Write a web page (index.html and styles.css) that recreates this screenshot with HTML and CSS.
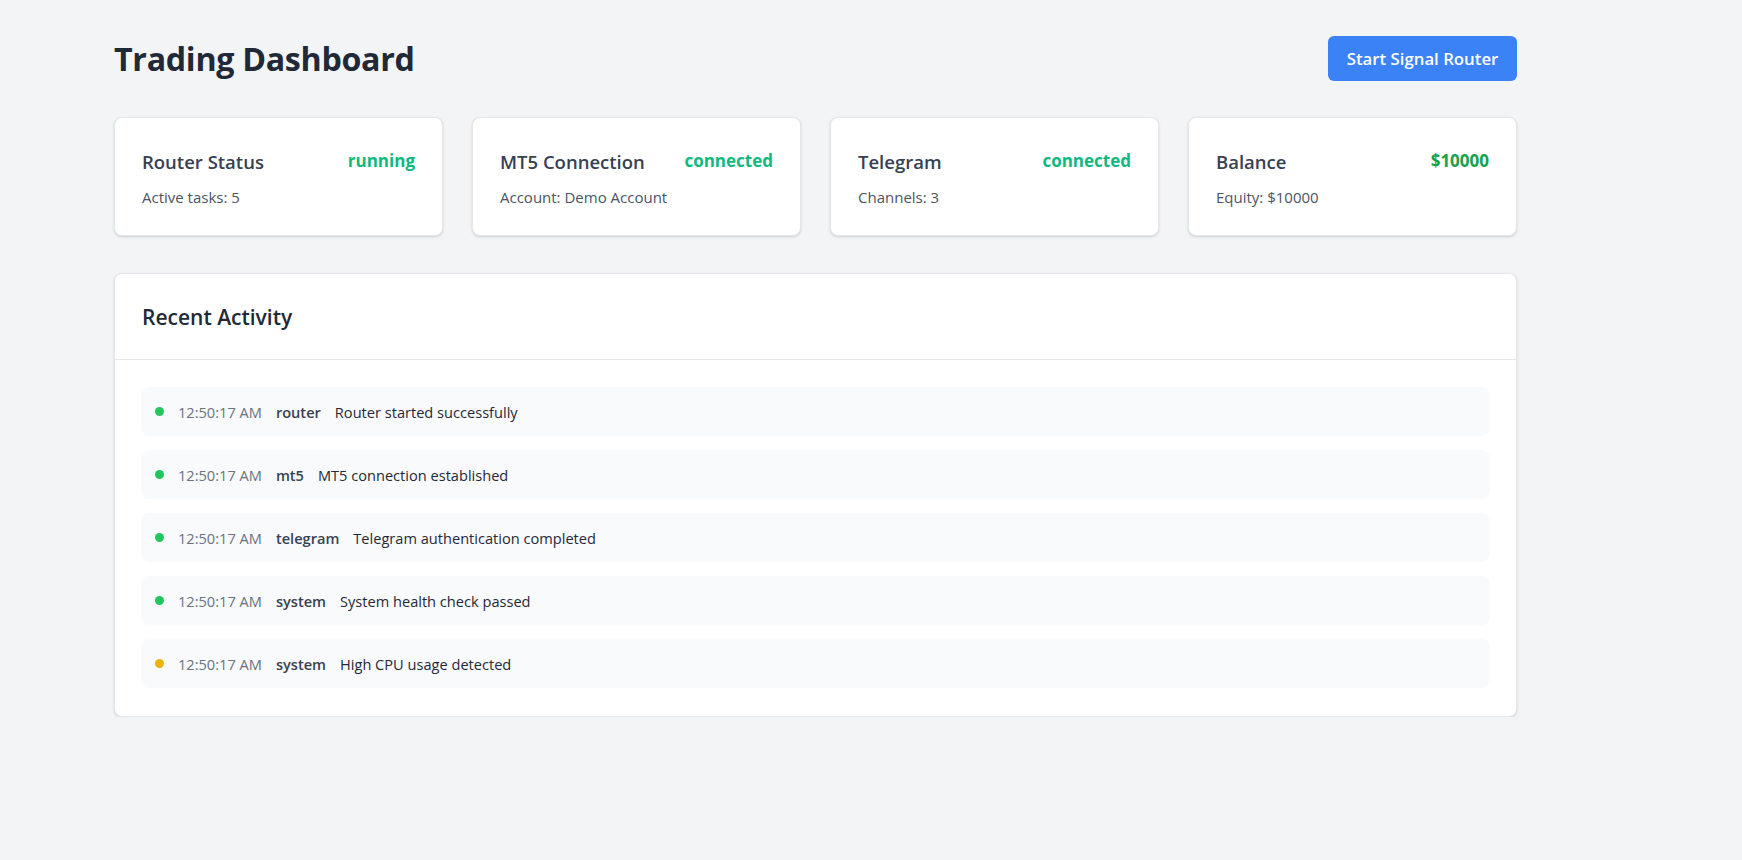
FILE: index.html
```html
<!DOCTYPE html>
<html lang="en">
<head>
<meta charset="utf-8">
<title>Trading Dashboard</title>
<link rel="stylesheet" href="styles.css">
</head>
<body>
<div class="page">
  <header class="header">
    <h1 class="title">Trading Dashboard</h1>
    <button class="btn-primary">Start Signal Router</button>
  </header>

  <section class="stats">
    <div class="card stat">
      <div class="stat-top">
        <h3 class="stat-title">Router Status</h3>
        <span class="stat-value ok">running</span>
      </div>
      <p class="stat-sub">Active tasks: 5</p>
    </div>
    <div class="card stat">
      <div class="stat-top">
        <h3 class="stat-title">MT5 Connection</h3>
        <span class="stat-value ok">connected</span>
      </div>
      <p class="stat-sub">Account: Demo Account</p>
    </div>
    <div class="card stat">
      <div class="stat-top">
        <h3 class="stat-title">Telegram</h3>
        <span class="stat-value ok">connected</span>
      </div>
      <p class="stat-sub">Channels: 3</p>
    </div>
    <div class="card stat">
      <div class="stat-top">
        <h3 class="stat-title">Balance</h3>
        <span class="stat-value money">$10000</span>
      </div>
      <p class="stat-sub">Equity: $10000</p>
    </div>
  </section>

  <section class="card activity">
    <div class="activity-head">
      <h2 class="activity-title">Recent Activity</h2>
    </div>
    <ul class="activity-list">
      <li class="row"><span class="dot green"></span><span class="time">12:50:17 AM</span><span class="src">router</span><span class="msg">Router started successfully</span></li>
      <li class="row"><span class="dot green"></span><span class="time">12:50:17 AM</span><span class="src">mt5</span><span class="msg">MT5 connection established</span></li>
      <li class="row"><span class="dot green"></span><span class="time">12:50:17 AM</span><span class="src">telegram</span><span class="msg">Telegram authentication completed</span></li>
      <li class="row"><span class="dot green"></span><span class="time">12:50:17 AM</span><span class="src">system</span><span class="msg">System health check passed</span></li>
      <li class="row"><span class="dot yellow"></span><span class="time">12:50:17 AM</span><span class="src">system</span><span class="msg">High CPU usage detected</span></li>
    </ul>
  </section>
</div>
</body>
</html>
```

FILE: styles.css
```css
* { box-sizing: border-box; }

html, body {
  margin: 0;
  padding: 0;
  background: #f3f4f6;
  font-family: "Open Sans", "Noto Sans", "Liberation Sans", sans-serif;
  color: #1f2937;
}

.page {
  width: 1403px;
  margin-left: 114px;
  padding-top: 36px;
}

.header {
  display: flex;
  justify-content: space-between;
  align-items: center;
  height: 45px;
}

.title {
  margin: 0;
  font-size: 32.2px;
  font-weight: 700;
  color: #1f2937;
  line-height: 45px;
  letter-spacing: -0.3px;
}

.btn-primary {
  height: 45px;
  width: 189px;
  border: 0;
  border-radius: 6px;
  background: #3b82f6;
  color: #fff;
  font-family: inherit;
  font-size: 16.8px;
  font-weight: 600;
  padding: 0;
}

.card {
  background: #fff;
  border-radius: 8px;
  box-shadow: 0 1px 3px rgba(0,0,0,0.10), 0 1px 2px rgba(0,0,0,0.06);
  border: 1px solid #e5e7eb;
}

.stats {
  margin-top: 36px;
  display: grid;
  grid-template-columns: repeat(4, 1fr);
  gap: 29px;
}

.stat {
  height: 119px;
  padding: 30px 27px 27px;
}

.stat-top {
  display: flex;
  justify-content: space-between;
  align-items: flex-start;
}

.stat-title {
  margin: 0;
  font-size: 18.5px;
  font-weight: 600;
  line-height: 28px;
  color: #374151;
}

.stat-value {
  font-size: 17px;
  font-weight: 700;
  line-height: 22px;
  margin-top: 2px;
}
.stat-value.ok { color: #10b981; }
.stat-value.money { color: #16a34a; }

.stat-sub {
  margin: 11px 0 0;
  font-size: 15px;
  line-height: 20px;
  color: #4b5563;
}

.activity {
  margin-top: 37px;
}

.activity-head {
  height: 86px;
  border-bottom: 1px solid #e5e7eb;
  padding: 0 27px;
  display: flex;
  align-items: center;
}

.activity-title {
  margin: 0;
  font-size: 21px;
  font-weight: 600;
  color: #1f2937;
}

.activity-list {
  list-style: none;
  margin: 0;
  padding: 27px 26px 28px;
  display: flex;
  flex-direction: column;
  gap: 14px;
}

.row {
  height: 49px;
  background: #f9fafb;
  border-radius: 8px;
  display: flex;
  align-items: center;
  padding: 0 14px;
  gap: 14px;
  font-size: 14.6px;
}

.dot {
  width: 9px;
  height: 9px;
  border-radius: 50%;
  flex: none;
}
.dot.green { background: #22c55e; }
.dot.yellow { background: #eab308; }

.time { color: #6b7280; }
.src { font-weight: 600; color: #374151; }
.msg { color: #1f2937; }
```
